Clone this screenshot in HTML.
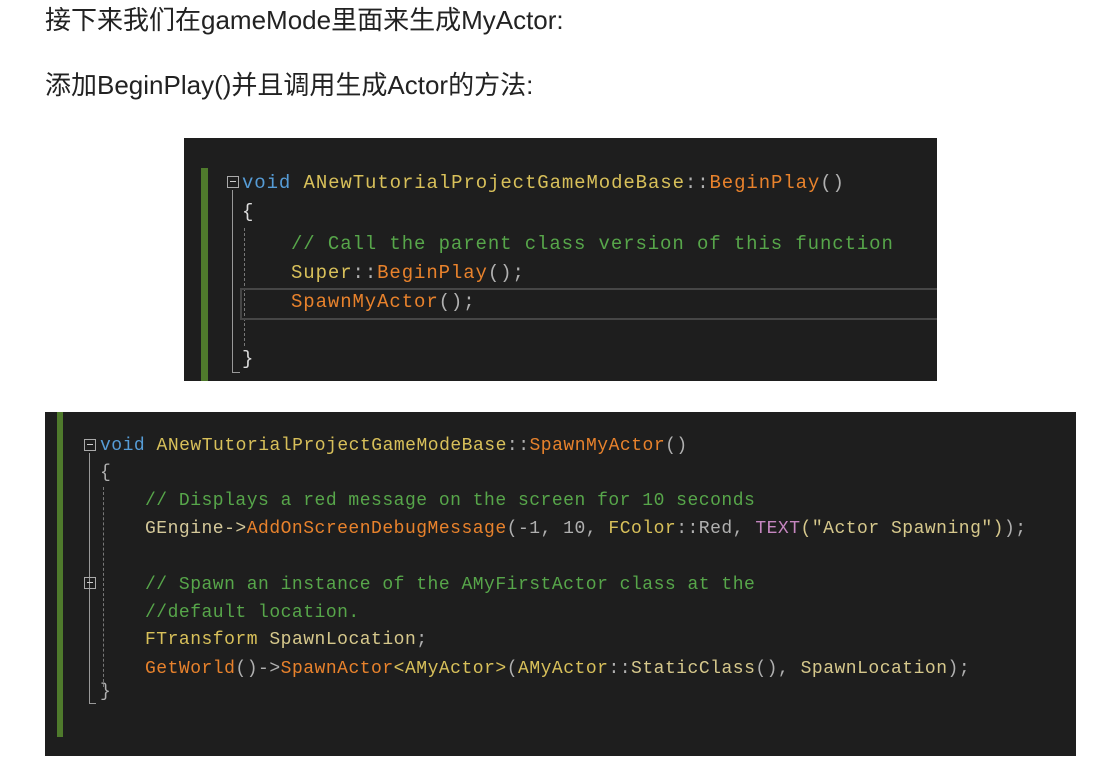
<!DOCTYPE html>
<html><head><meta charset="utf-8"><style>
body{margin:0;width:1102px;height:775px;background:#fff;position:relative;overflow:hidden}
.p{position:absolute;left:45px;font-family:"Liberation Sans","Noto Sans CJK SC",sans-serif;font-size:26px;color:#222;white-space:nowrap;line-height:30px}
.pan{position:absolute;background:#1e1e1e;overflow:hidden}
.bar{position:absolute;background:#4f7a2c}
.l{position:absolute;white-space:pre;font-family:"Liberation Mono",monospace;color:#dcdcdc;line-height:24px}
.k{color:#569cd6}.y{color:#d8c05a}.o{color:#e8822c}.c{color:#57a64a}.g{color:#b0b0b0}.m{color:#c586c0}.w{color:#d4c89a}.s{color:#d6c88c}
.box{position:absolute;border:1px solid #aaa;width:10px;height:10px}
.box:after{content:"";position:absolute;left:2px;top:4px;width:6px;height:1px;background:#ccc}
.vl{position:absolute;border-left:1px dashed #777}
.sl{position:absolute;border-left:1px solid #999}
</style></head><body>
<div class="p" style="top:5px">接下来我们在gameMode里面来生成MyActor:</div>
<div class="p" style="top:70px">添加BeginPlay()并且调用生成Actor的方法:</div>

<div class="pan" style="left:184px;top:138px;width:753px;height:243px">
 <div class="bar" style="left:17px;top:30px;width:7px;height:213px"></div>
 <div class="box" style="left:43px;top:38px"></div>
 <div class="sl" style="left:48px;top:52px;height:183px"></div>
 <div style="position:absolute;left:48px;top:234px;width:8px;border-top:1px solid #999"></div>
 <div class="vl" style="left:60px;top:90px;height:118px"></div>
 <div style="position:absolute;left:56px;top:150px;width:697px;height:28px;border:2px solid #464646;border-right:none"></div>
 <div class="l" style="font-size:19px;letter-spacing:0.9px;left:58px;top:33px"><span class="k">void</span> <span class="y">ANewTutorialProjectGameModeBase</span><span class="g">::</span><span class="o">BeginPlay</span><span class="g">()</span></div>
 <div class="l" style="font-size:19px;letter-spacing:0.9px;left:58px;top:62px">{</div>
 <div class="l" style="font-size:19px;letter-spacing:0.9px;left:107px;top:94px"><span class="c">// Call the parent class version of this function</span></div>
 <div class="l" style="font-size:19px;letter-spacing:0.9px;left:107px;top:123px"><span class="y">Super</span><span class="g">::</span><span class="o">BeginPlay</span><span class="g">();</span></div>
 <div class="l" style="font-size:19px;letter-spacing:0.9px;left:107px;top:152px"><span class="o">SpawnMyActor</span><span class="g">();</span></div>
 <div class="l" style="font-size:19px;letter-spacing:0.9px;left:58px;top:209px">}</div>
</div>

<div class="pan" style="left:45px;top:412px;width:1031px;height:344px">
 <div class="bar" style="left:12px;top:0;width:6px;height:325px"></div>
 <div class="box" style="left:39px;top:27px"></div>
 <div class="sl" style="left:44px;top:41px;height:250px"></div>
 <div style="position:absolute;left:44px;top:291px;width:7px;border-top:1px solid #999"></div>
 <div class="box" style="left:39px;top:165px"></div>
 <div class="vl" style="left:58px;top:75px;height:200px"></div>
 <div class="l" style="font-size:18px;letter-spacing:0.5px;left:55px;top:22px"><span class="k">void</span> <span class="y">ANewTutorialProjectGameModeBase</span><span class="g">::</span><span class="o">SpawnMyActor</span><span class="g">()</span></div>
 <div class="l" style="font-size:18px;letter-spacing:0.5px;left:55px;top:49px"><span class="g">{</span></div>
 <div class="l" style="font-size:18px;letter-spacing:0.5px;left:100px;top:77px"><span class="c">// Displays a red message on the screen for 10 seconds</span></div>
 <div class="l" style="font-size:18px;letter-spacing:0.5px;left:100px;top:105px"><span class="w">GEngine-&gt;</span><span class="o">AddOnScreenDebugMessage</span><span class="g">(-1, 10, </span><span class="y">FColor</span><span class="g">::Red, </span><span class="m">TEXT</span><span class="s">("Actor Spawning")</span><span class="g">);</span></div>
 <div class="l" style="font-size:18px;letter-spacing:0.5px;left:100px;top:161px"><span class="c">// Spawn an instance of the AMyFirstActor class at the</span></div>
 <div class="l" style="font-size:18px;letter-spacing:0.5px;left:100px;top:189px"><span class="c">//default location.</span></div>
 <div class="l" style="font-size:18px;letter-spacing:0.5px;left:100px;top:216px"><span class="y">FTransform</span> <span class="s">SpawnLocation</span><span class="g">;</span></div>
 <div class="l" style="font-size:18px;letter-spacing:0.5px;left:100px;top:245px"><span class="o">GetWorld</span><span class="g">()-&gt;</span><span class="o">SpawnActor</span><span class="y">&lt;AMyActor&gt;</span><span class="g">(</span><span class="y">AMyActor</span><span class="g">::</span><span class="s">StaticClass</span><span class="g">(), </span><span class="s">SpawnLocation</span><span class="g">);</span></div>
 <div class="l" style="font-size:18px;letter-spacing:0.5px;left:55px;top:268px"><span class="g">}</span></div>
</div>
</body></html>
